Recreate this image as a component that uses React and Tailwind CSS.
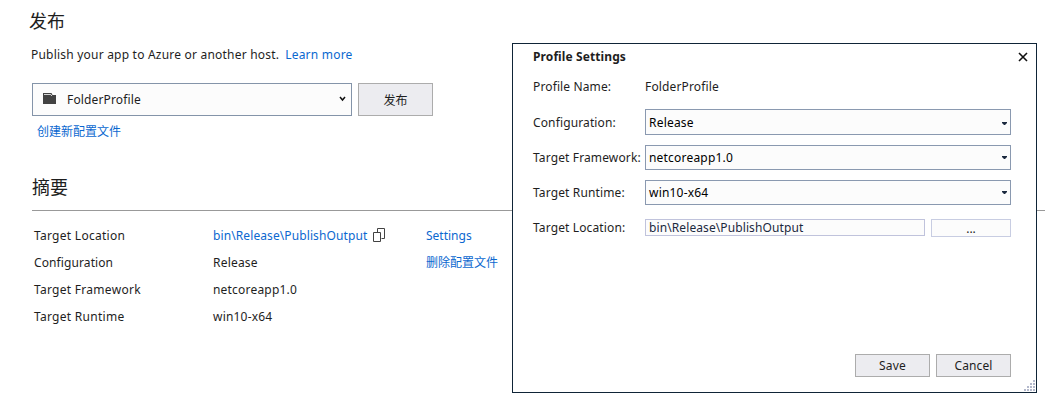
import React from "react";

const summary = [
  ["Target Location", "bin\\Release\\PublishOutput"],
  ["Configuration", "Release"],
  ["Target Framework", "netcoreapp1.0"],
  ["Target Runtime", "win10-x64"],
];

function FolderIcon() {
  return (
    <svg width="14" height="12" viewBox="0 0 14 12" className="mb-0.5 shrink-0" fill="#424242">
      <path d="M0 0H8.5L9.5 2H13V11H0Z" />
      <path d="M1 1.5H7.8L8.8 3" stroke="#fcfcfc" strokeWidth="0.8" fill="none" />
    </svg>
  );
}

function CopyIcon() {
  return (
    <svg width="13" height="15" viewBox="0 0 13 15" className="shrink-0" fill="none" stroke="#424242">
      <path d="M4.5 4V0.5H11.5V10.5H8.5" />
      <path d="M0.5 4.5H7.5V13.5H0.5Z" />
    </svg>
  );
}

function Combo({ children, className = "h-[25px]" }) {
  return (
    <div className={`flex w-[366px] items-center justify-between border border-[#8a99b0] bg-[#fcfcfc] pr-[3px] pl-[3px] tracking-[0.2px] text-black ${className}`}>
      <span>{children}</span>
      <svg width="5" height="3" viewBox="0 0 5 3" fill="#1b293e">
        <path d="M0 0H5V1L3 3H2L0 1Z" />
      </svg>
    </div>
  );
}

function Field({ label, children, className = "" }) {
  return (
    <div className={`flex items-center ${className}`}>
      <span className="w-28 shrink-0 tracking-[0.13px] whitespace-nowrap">{label}</span>
      {children}
    </div>
  );
}

function Grip() {
  const dots = [[9, 0], [6, 3], [9, 3], [3, 6], [6, 6], [9, 6], [0, 9], [3, 9], [6, 9], [9, 9]];
  return (
    <svg width="11" height="11" viewBox="0 0 11 11" className="absolute right-px bottom-px" fill="#b4b9cc">
      {dots.map(([x, y]) => (
        <rect key={`${x}-${y}`} x={x} y={y} width="2" height="2" />
      ))}
    </svg>
  );
}

function Dialog() {
  return (
    <section className="absolute top-[43px] left-[512px] flex h-[350px] w-[525px] flex-col border border-[#0f2437] bg-white pl-5 text-[#1e1e1e]">
      <header className="flex h-[26px] items-center justify-between pr-2">
        <h2 className="font-bold tracking-[0.1px]">Profile Settings</h2>
        <svg width="10" height="10" viewBox="0 0 10 10" stroke="#111" strokeWidth="1.6" fill="none">
          <path d="M1 1L9 9M9 1L1 9" />
        </svg>
      </header>
      <Field label="Profile Name:" className="mt-2 h-[18px]"><span className="tracking-[0.15px]">FolderProfile</span></Field>
      <div className="mt-[13px] flex flex-col gap-2.5">
        <Field label={<span className="block pt-0.5">Configuration:</span>}><Combo className="h-[26px] pt-0.5">Release</Combo></Field>
        <Field label="Target Framework:"><Combo>netcoreapp1.0</Combo></Field>
        <Field label="Target Runtime:"><Combo>win10-x64</Combo></Field>
      </div>
      <Field label="Target Location:" className="mt-3.5 h-[18px]">
        <div className="flex h-[17px] w-[280px] items-center self-start border border-[#c0c3dc] bg-[#fcfcfc] pt-px pl-[3px] tracking-[0.1px] text-[#1b293e]">
          bin\Release\PublishOutput
        </div>
        <button className="ml-1.5 flex h-[18px] w-20 items-center justify-center border border-[#c8cde2] bg-[#fcfcfc] pt-0.5">...</button>
      </Field>
      <footer className="mt-auto mb-[15px] flex justify-end gap-1.5 pr-[25px]">
        <button className="h-[23px] w-[75px] border border-[#acacac] bg-[#ececf0] tracking-[0.15px]">Save</button>
        <button className="h-[23px] w-[75px] border border-[#acacac] bg-[#ececf0] tracking-[0.1px]">Cancel</button>
      </footer>
      <Grip />
    </section>
  );
}

export default function App() {
  return (
    <main className="relative h-[403px] w-[1045px] overflow-hidden bg-white pl-8 font-['Noto_Sans','Noto_Sans_CJK_SC',sans-serif] text-[12px] leading-[18px] text-[#1e1e1e]">
      <h1 className="-ml-[3px] pt-2 text-[18px] leading-[26px]">发布</h1>
      <p className="mt-3 -ml-px flex h-[18px] gap-1.5 tracking-[0.21px] whitespace-nowrap">
        <span>Publish your app to Azure or another host.</span>
        <a className="text-[#0b68d0]">Learn more</a>
      </p>
      <div className="mt-[19px] flex gap-1.5">
        <div className="flex h-[33px] w-80 items-center border border-[#8494a9] bg-[#fcfcfc] pr-[5px] pl-2.5">
          <FolderIcon />
          <span className="ml-2.5 grow tracking-[0.15px]">FolderProfile</span>
          <svg width="7" height="6" viewBox="0 0 7 6" className="mb-0.5" fill="none" stroke="#111" strokeWidth="1.5">
            <path d="M1 1L3.5 4L6 1" />
          </svg>
        </div>
        <button className="h-[33px] w-[75px] border border-[#acacac] bg-[#ececf0] pt-0.5">发布</button>
      </div>
      <a className="mt-[7px] ml-[5px] block text-[#0b68d0]">创建新配置文件</a>
      <h2 className="mt-[33px] border-b border-[#999] pb-2.5 text-[18px] leading-[26px]">摘要</h2>
      <dl className="mt-[11px] flex flex-col pl-0.5">
        {summary.map(([label, value], i) => (
          <div key={label} className="flex h-[27px] items-center">
            <dt className={i === 1 ? "w-[179px] tracking-[0.1px]" : "w-[179px] tracking-[0.28px]"}>{label}</dt>
            <dd className={i === 0 ? "flex w-[213px] items-center gap-1.5 tracking-[0.1px] text-[#0b68d0]" : "w-[213px] tracking-[0.2px]"}>
              <span>{value}</span>
              {i === 0 && <CopyIcon />}
            </dd>
            {i === 0 && <dd className="text-[#0b68d0]">Settings</dd>}
            {i === 1 && <dd className="text-[#0b68d0]">删除配置文件</dd>}
          </div>
        ))}
      </dl>
      <Dialog />
    </main>
  );
}
